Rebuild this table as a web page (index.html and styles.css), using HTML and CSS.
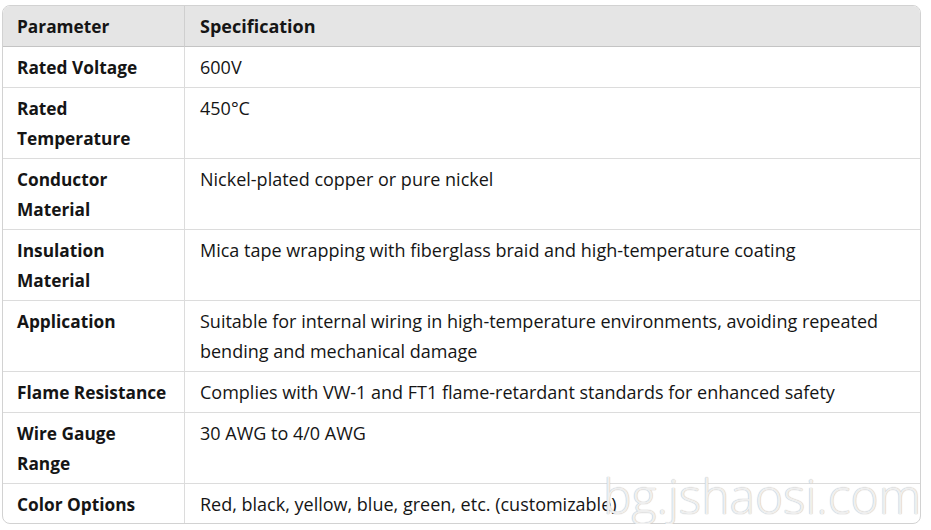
FILE: index.html
```html
<!DOCTYPE html>
<html lang="en">
<head>
<meta charset="utf-8">
<title>Specification</title>
<link rel="stylesheet" href="styles.css">
</head>
<body>
<div class="wrap">
  <table class="spec">
    <thead>
      <tr><th class="c1">Parameter</th><th>Specification</th></tr>
    </thead>
    <tbody>
      <tr><td class="c1">Rated Voltage</td><td>600V</td></tr>
      <tr><td class="c1">Rated Temperature</td><td>450°C</td></tr>
      <tr><td class="c1">Conductor Material</td><td>Nickel-plated copper or pure nickel</td></tr>
      <tr><td class="c1">Insulation Material</td><td>Mica tape wrapping with fiberglass braid and high-temperature coating</td></tr>
      <tr><td class="c1">Application</td><td>Suitable for internal wiring in high-temperature environments, avoiding repeated bending and mechanical damage</td></tr>
      <tr><td class="c1">Flame Resistance</td><td>Complies with VW-1 and FT1 flame-retardant standards for enhanced safety</td></tr>
      <tr><td class="c1">Wire Gauge Range</td><td>30 AWG to 4/0 AWG</td></tr>
      <tr><td class="c1">Color Options</td><td>Red, black, yellow, blue, green, etc. (customizable)</td></tr>
    </tbody>
  </table>
  <div class="watermark">bg.jshaosi.com</div>
</div>
</body>
</html>
```
FILE: styles.css
```css
html, body {
  margin: 0;
  padding: 0;
  background: #ffffff;
}
body {
  font-family: "Open Sans", "Noto Sans", sans-serif;
  color: #151515;
}
.wrap {
  position: relative;
  padding: 5px 10px 0 2px;
  width: 919px;
}
.spec {
  width: 919px;
  border-collapse: separate;
  border-spacing: 0;
  border: 1px solid #d2d2d2;
  border-radius: 8px;
  overflow: hidden;
  font-size: 18px;
  line-height: 30px;
  table-layout: fixed;
}
.spec th, .spec td {
  text-align: left;
  vertical-align: top;
  padding: 5px 15px 5px 15px;
  border-bottom: 1px solid #dcdcdc;
}
.spec th {
  background: #e5e5e5;
  font-weight: 700;
  border-bottom: 1px solid #c4c4c4;
}
.spec tbody tr:last-child td {
  border-bottom: none;
  padding-bottom: 4px;
}
.spec .c1 {
  width: 153px;
  font-size: 17.3px;
  font-weight: 700;
  border-right: 1px solid #dcdcdc;
  padding: 6px 14px 4px 14px;
}
.spec tbody tr:last-child td.c1 {
  padding-bottom: 3px;
}
.spec th.c1 {
  border-right: 1px solid #cfcfcf;
}
.watermark {
  position: absolute;
  left: 603px;
  top: 466px;
  font-family: "Open Sans", sans-serif;
  font-weight: 300;
  font-size: 48px;
  line-height: 60px;
  color: rgba(255, 255, 255, 0.8);
  text-shadow: 0 0 1px #b8b8b8, 0 0 1px #c8c8c8;
  white-space: nowrap;
}
```
